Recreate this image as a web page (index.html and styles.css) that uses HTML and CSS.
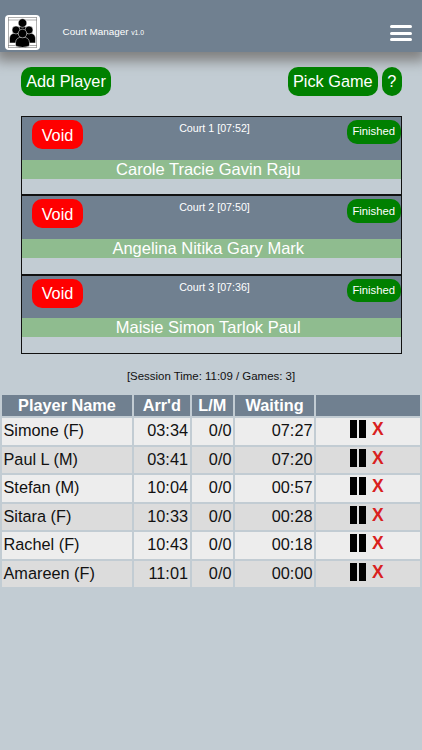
FILE: index.html
```
<!DOCTYPE html>
<html lang="en">
<head>
<meta charset="utf-8">
<title>Court Manager</title>
<link rel="stylesheet" href="styles.css">
</head>
<body>
<header class="topbar">
  <svg class="logo" viewBox="0 0 35 35">
    <rect width="35" height="35" rx="4" fill="#fff"/>
    <path d="M3 2.500H32M3 5H32M3 30.500H32M3 32.500H32M3.500 2.500V32.500M31.500 2.500V32.500" stroke="#777" stroke-width=".6" fill="none"/>
    <g stroke="#fff" stroke-width=".5">
      <path d="M12 18Q12 11 17.500 11Q23 11 23 18Z"/><circle cx="17.500" cy="8" r="4.300"/>
      <path d="M4.500 28V23Q5 18 11 18Q16 18 16 28Z"/><circle cx="11" cy="15" r="4"/>
      <path d="M30.500 28V23Q30 18 24 18Q19 18 19 28Z"/><circle cx="24" cy="15" r="4"/>
      <path d="M10.500 31V27.500Q11 22 17.500 22Q24 22 24.500 27.500V31Q17.500 34 10.500 31Z"/><circle cx="17.500" cy="18.500" r="4.300"/>
    </g>
  </svg>
  <div class="title">Court Manager <span class="version">v1.0</span></div>
  <div class="menu"><i></i><i></i><i></i></div>
</header>
<div class="actions">
  <button class="btn add">Add Player</button>
  <button class="btn pick">Pick Game</button>
  <button class="btn help">?</button>
</div>
<main class="courts">
  <section class="court">
    <div class="court-head"><button class="btn void">Void</button><span class="court-name">Court 1 [07:52]</span><button class="btn finished">Finished</button></div>
    <div class="players">Carole Tracie Gavin Raju</div>
  </section>
  <section class="court">
    <div class="court-head"><button class="btn void">Void</button><span class="court-name">Court 2 [07:50]</span><button class="btn finished">Finished</button></div>
    <div class="players">Angelina Nitika Gary Mark</div>
  </section>
  <section class="court">
    <div class="court-head"><button class="btn void">Void</button><span class="court-name">Court 3 [07:36]</span><button class="btn finished">Finished</button></div>
    <div class="players">Maisie Simon Tarlok Paul</div>
  </section>
</main>
<div class="session">[Session Time: 11:09 / Games: 3]</div>
<div class="queue">
  <div class="row head"><b>Player Name</b><b>Arr'd</b><b>L/M</b><b>Waiting</b><b></b></div>
  <div class="row"><span>Simone (F)</span><span>03:34</span><span>0/0</span><span>07:27</span><span class="tools"><i></i><i></i><b>X</b></span></div>
  <div class="row"><span>Paul L (M)</span><span>03:41</span><span>0/0</span><span>07:20</span><span class="tools"><i></i><i></i><b>X</b></span></div>
  <div class="row"><span>Stefan (M)</span><span>10:04</span><span>0/0</span><span>00:57</span><span class="tools"><i></i><i></i><b>X</b></span></div>
  <div class="row"><span>Sitara (F)</span><span>10:33</span><span>0/0</span><span>00:28</span><span class="tools"><i></i><i></i><b>X</b></span></div>
  <div class="row"><span>Rachel (F)</span><span>10:43</span><span>0/0</span><span>00:18</span><span class="tools"><i></i><i></i><b>X</b></span></div>
  <div class="row"><span>Amareen (F)</span><span>11:01</span><span>0/0</span><span>00:00</span><span class="tools"><i></i><i></i><b>X</b></span></div>
</div>
</body>
</html>
```
FILE: styles.css
```
* { box-sizing: border-box; }
body {
  margin: 0;
  height: 750px;
  overflow: hidden;
  background: #c2ccd3;
  font-family: "Liberation Sans", Arial, sans-serif;
  font-size: 16.3px;
  color: #111;
}
.topbar {
  height: 52px;
  display: flex;
  align-items: flex-start;
  background: #708090;
  box-shadow: 0 5px 12px 4px gray;
  color: #fff;
}
.logo { width: 35px; height: 35px; margin: 15px 0 0 5.400px; }
.title { margin: 25px 0 0 22.200px; font-size: 9.9px; line-height: 13px; }
.version { font-size: 6.8px; }
.menu { margin: 25px 10px 0 auto; width: 22px; display: grid; gap: 3.500px; }
.menu i { height: 3px; border-radius: 1.500px; background: #fff; }
.btn {
  border: 0;
  padding: 0;
  border-radius: 10px;
  background: #008000;
  color: #fff;
  font: 16.3px/28px "Liberation Sans", Arial, sans-serif;
  height: 29px;
  text-align: center;
}
.actions { display: flex; margin: 14.500px 20.500px 0 21px; }
.add { width: 90px; margin-right: auto; }
.pick { width: 89.500px; margin-right: 4.500px; }
.help { width: 19.500px; }
.courts { margin: 20.500px 20.500px 0 21px; }
.court { height: 79.300px; border: 1px solid #111; }
.court-head {
  height: 42.500px;
  background: #708090;
  display: grid;
  grid-template-columns: 61px 1fr 53.500px;
  align-items: start;
  padding-top: 3px;
}
.void { width: 51px; margin-left: 10px; background: #f00; }
.finished { height: 23.500px; font-size: 11.3px; line-height: 23px; }
.court-name { color: #fff; font-size: 10.7px; line-height: 12px; margin-top: 2px; padding-right: 1px; text-align: center; }
.players { height: 19px; line-height: 18px; background: #8fbc8f; color: #fff; text-align: center; font-size: 16.5px; padding-right: 6px; }
.session { margin-top: 15px; font-size: 11.45px; line-height: 15px; text-align: center; }
.queue { margin: 11px 2px 0; display: grid; gap: 2px; }
.row { display: grid; grid-template-columns: 130px 55.500px 41.500px 79px 1fr; gap: 2px; height: 26.500px; line-height: 25px; }
.row > * { background: #ededed; text-align: right; padding: 0 1.500px; }
.row:nth-child(odd) > * { background: #dcdcdc; }
.row > span:first-child { text-align: left; }
.row.head { height: 21.500px; line-height: 21px; color: #fff; }
.row.head > b { background: #708090; text-align: center; }
.row > .tools { display: flex; padding: 2px 0 0 34px; }
.tools i { width: 6.500px; height: 18px; margin-right: 2.500px; background: #000; }
.tools b { margin-left: 4px; color: #d9201e; line-height: 19px; font-size: 17.5px; }
```
